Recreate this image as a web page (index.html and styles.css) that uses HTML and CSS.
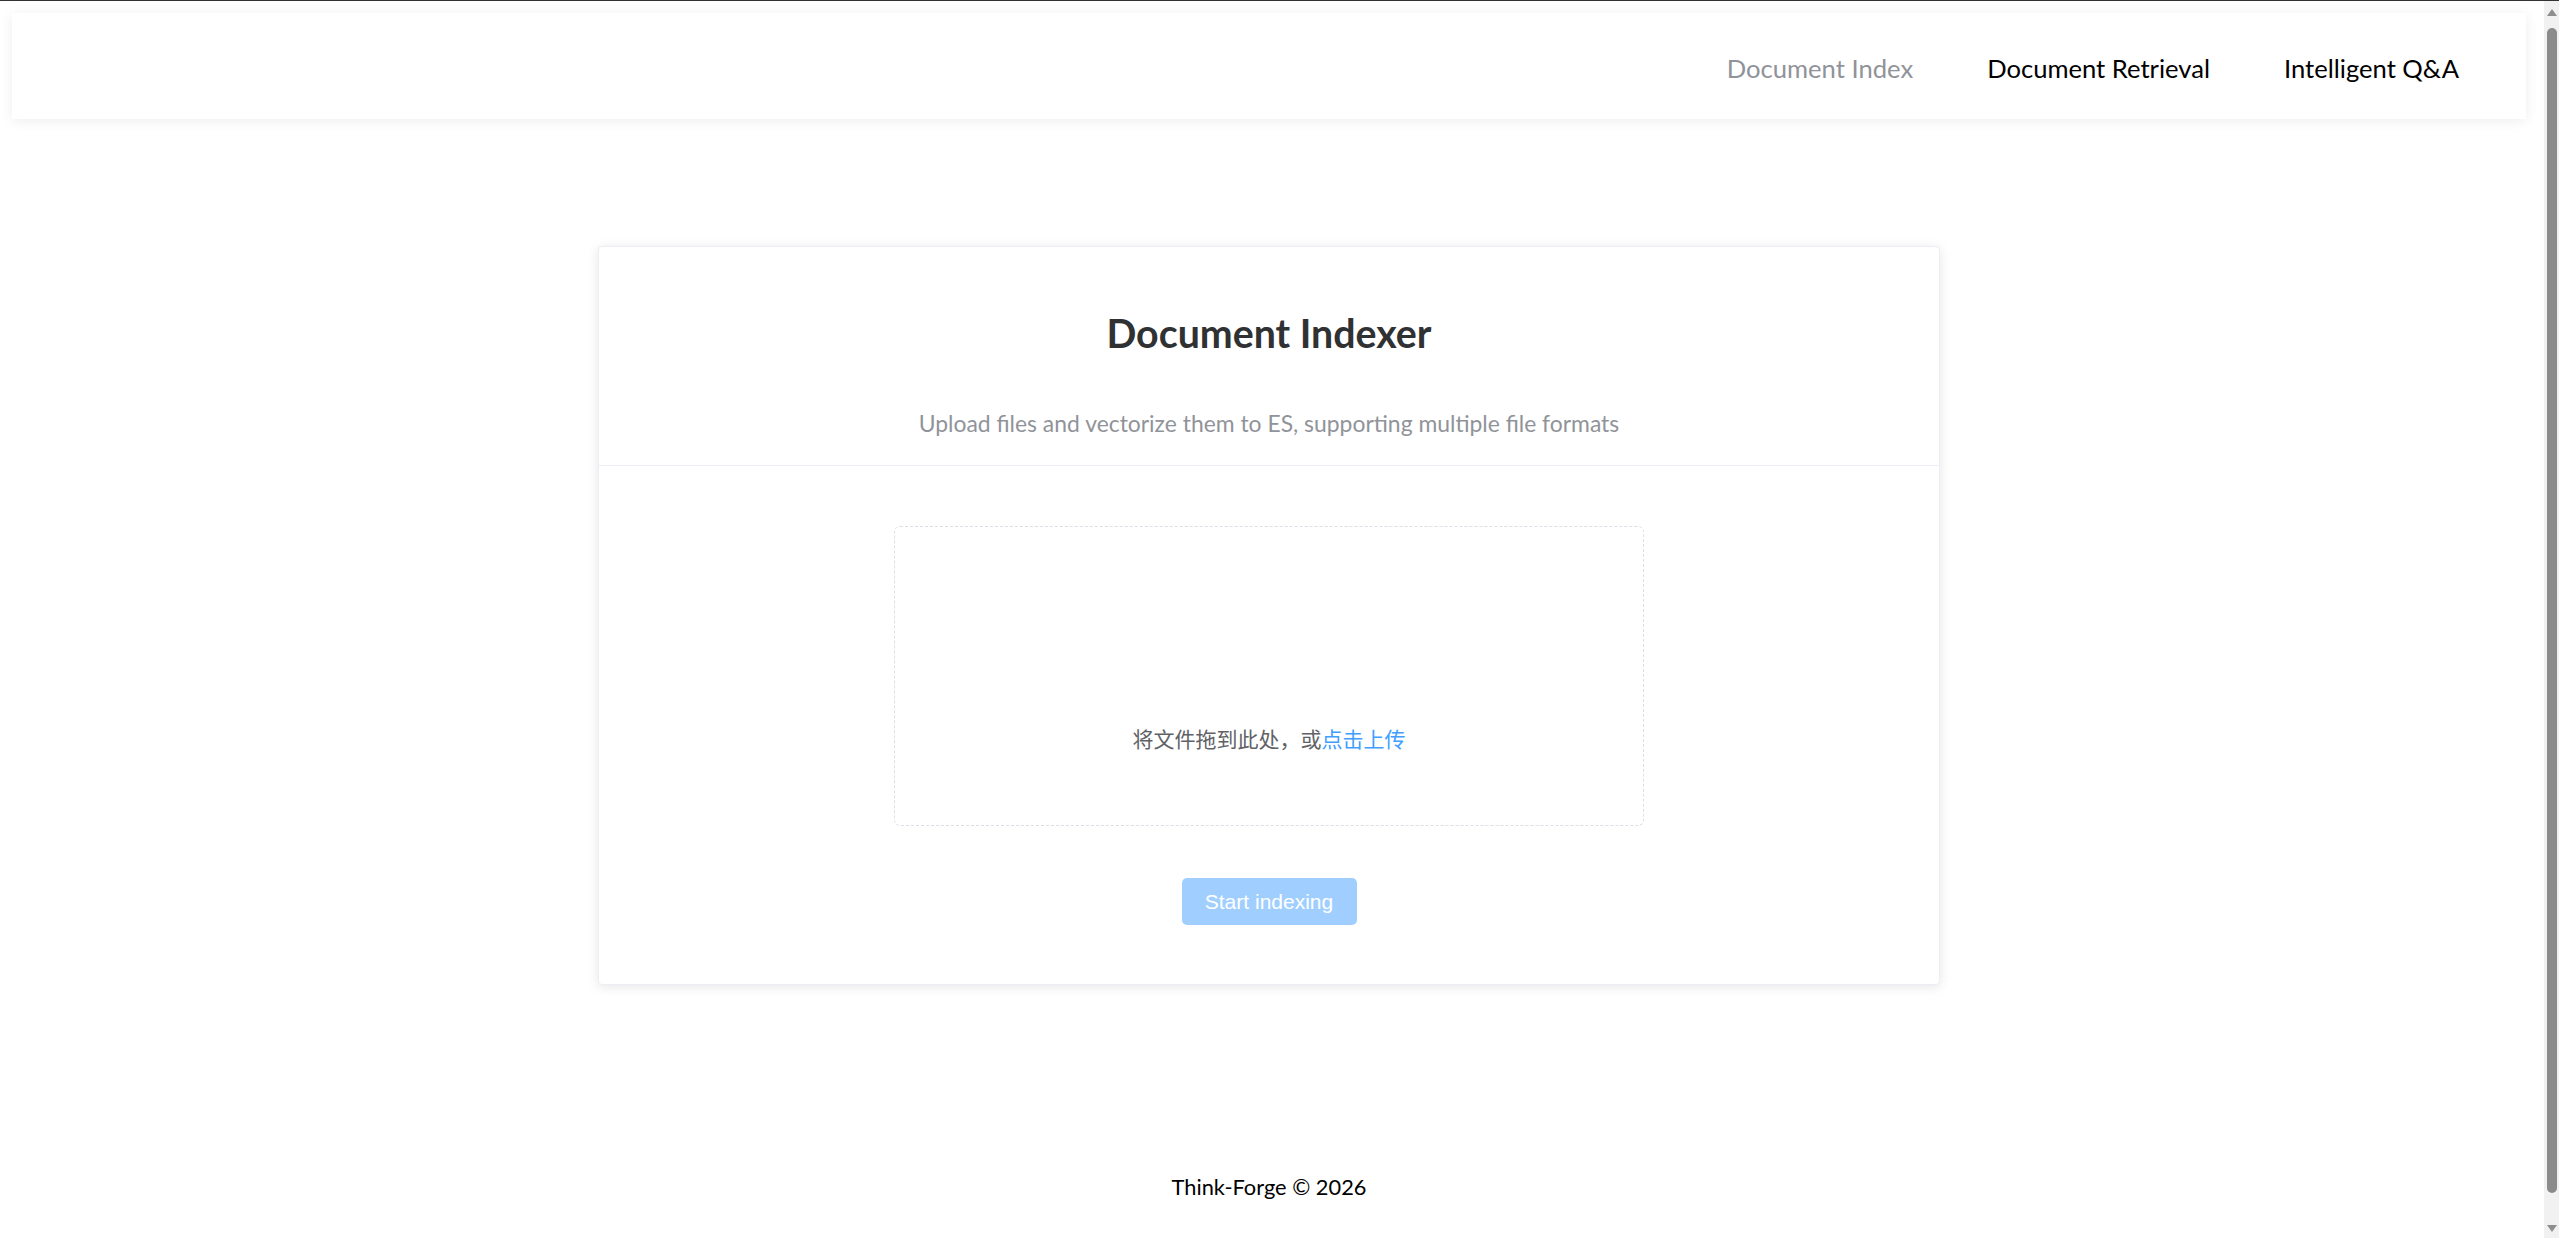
FILE: index.html
```html
<!DOCTYPE html>
<html lang="en">
<head>
<meta charset="utf-8">
<title>Document Indexer</title>
<link rel="stylesheet" href="styles.css">
</head>
<body>
<div class="app">
  <header class="topbar">
    <nav class="nav">
      <a class="nav-item active">Document Index</a>
      <a class="nav-item">Document Retrieval</a>
      <a class="nav-item">Intelligent Q&amp;A</a>
    </nav>
  </header>
  <main class="main">
    <section class="card">
      <div class="card-header">
        <h2 class="card-title">Document Indexer</h2>
        <p class="card-subtitle">Upload files and vectorize them to ES, supporting multiple file formats</p>
      </div>
      <div class="card-body">
        <div class="dropzone">
          <div class="dz-text">将文件拖到此处，或<em>点击上传</em></div>
        </div>
        <button class="btn" disabled>Start indexing</button>
      </div>
    </section>
  </main>
  <footer class="footer">Think-Forge © 2026</footer>
</div>
<div class="scrollbar" aria-hidden="true">
  <div class="sb-arrow sb-up"></div>
  <div class="sb-track"><div class="sb-thumb"></div></div>
  <div class="sb-arrow sb-down"></div>
</div>
</body>
</html>
```

FILE: styles.css
```css
html {
  border-top: 1px solid #333;
}
body {
  margin: 0;
  background: #fff;
  font-family: Lato, "Noto Sans", sans-serif;
}
.app {
  padding: 12px 33px 0 12px;
}
.topbar {
  height: 106px;
  background: #fff;
  box-shadow: 0 2px 12px 0 rgba(0, 0, 0, 0.07);
  display: flex;
  justify-content: flex-end;
  align-items: center;
  padding-right: 67px;
}
.nav {
  display: flex;
  gap: 74px;
  padding-top: 4px;
}
.nav-item {
  font-size: 25.6px;
  line-height: 30px;
  color: #000;
  cursor: pointer;
}
.nav-item.active {
  color: #909399;
}
.main {
  padding-top: 127px;
}
.card {
  width: 1340px;
  margin: 0 auto;
  background: #fff;
  border: 1px solid #ebeef5;
  border-radius: 4px;
  box-shadow: 0 2px 12px 0 rgba(0, 0, 0, 0.1);
}
.card-header {
  padding: 63px 20px 28px;
  border-bottom: 1px solid #ebeef5;
  text-align: center;
}
.card-title {
  margin: 0;
  font-size: 39.3px;
  line-height: 46px;
  font-weight: 700;
  color: #303133;
}
.card-subtitle {
  margin: 54px 0 0;
  font-size: 22.9px;
  line-height: 27px;
  color: #909399;
}
.card-body {
  padding: 60px 20px 59px;
  display: flex;
  flex-direction: column;
  align-items: center;
}
.dropzone {
  width: 748px;
  height: 298px;
  border: 1px dashed #dcdfe6;
  border-radius: 6px;
  text-align: center;
}
.dz-text {
  padding-top: 195px;
  font-family: "Noto Sans CJK SC", sans-serif;
  font-size: 21px;
  line-height: 32px;
  color: #606266;
}
.dz-text em {
  font-style: normal;
  color: #409eff;
}
.btn {
  margin-top: 52px;
  width: 175px;
  height: 47px;
  border: none;
  border-radius: 5px;
  background: #a0cfff;
  color: #fff;
  font-family: "Liberation Sans", Arial, sans-serif;
  font-size: 21px;
}
.footer {
  padding: 187px 0 89px;
  text-align: center;
  font-size: 21.8px;
  line-height: 30px;
  color: #000;
}
.scrollbar {
  position: fixed;
  top: 1px;
  right: 0;
  bottom: 0;
  width: 15px;
  background: #f1f1f1;
  display: flex;
  flex-direction: column;
  align-items: center;
}
.sb-arrow {
  flex: 0 0 auto;
  width: 0;
  height: 0;
  border-left: 5px solid transparent;
  border-right: 5px solid transparent;
}
.sb-up {
  margin-top: 8px;
  border-bottom: 7px solid #8e8e8e;
}
.sb-down {
  margin-bottom: 6px;
  border-top: 7px solid #8e8e8e;
}
.sb-track {
  flex: 1 1 auto;
  width: 100%;
  padding: 12px 0 32px;
  display: flex;
  justify-content: center;
}
.sb-thumb {
  width: 10px;
  height: 100%;
  border-radius: 5px;
  background: #8b8b8b;
}
```
